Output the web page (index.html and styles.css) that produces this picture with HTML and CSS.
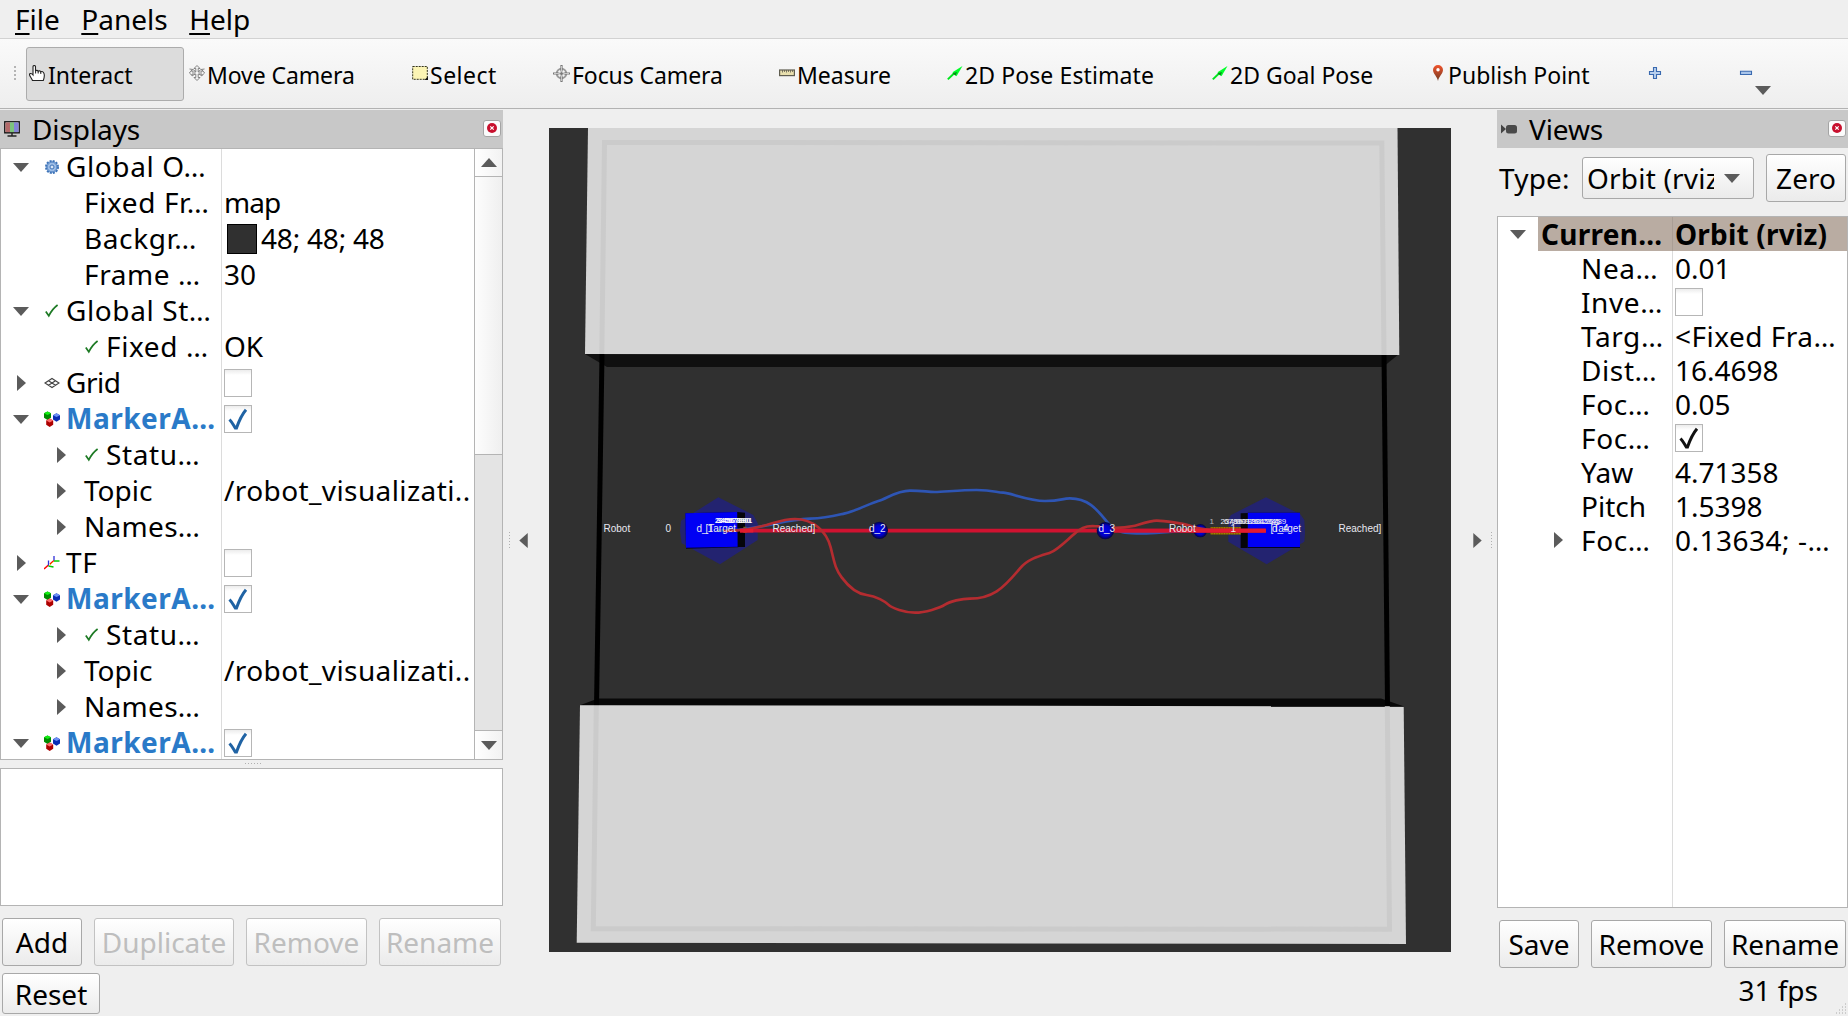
FILE: index.html
```html
<!DOCTYPE html>
<html lang="en">
<head>
<meta charset="utf-8">
<title>RViz</title>
<link rel="stylesheet" href="styles.css">
</head>
<body>
<svg width="0" height="0" class="defs" aria-hidden="true">
  <defs>
    <symbol id="down" viewBox="0 0 16 9"><path d="M0 0h16L8 9z" fill="#5b5b5b"/></symbol>
    <symbol id="right" viewBox="0 0 9 16"><path d="M0 0v16l9-8z" fill="#5b5b5b"/></symbol>
    <symbol id="tick" viewBox="0 0 16 16"><path d="M1.8 8.6l3 4.2C7 8.5 9.5 5 13.6 2" fill="none" stroke="#1d7a24" stroke-width="1.7"/></symbol>
    <symbol id="cubes" viewBox="0 0 16 16">
      <path d="M0 2.200L3.500.4 7 2.200v4.500L3.500 8.900 0 6.700z" fill="#008a00"/><path d="M0 2.200L3.500.4 7 2.200 3.500 4z" fill="#12f012"/>
      <path d="M9 4.200L12.500 2.300 16 4.200v4.300l-3.500 2.200L9 8.500z" fill="#0a2cb4"/><path d="M9 4.200l3.500-1.900L16 4.200 12.500 6z" fill="#6b8ff5"/>
      <path d="M2.200 9.500l3.500-1.900 3.500 1.900v4.300L5.700 16l-3.500-2.200z" fill="#ad0000"/><path d="M2.200 9.500l3.500-1.900 3.500 1.900-3.500 2z" fill="#ff6a6a"/>
    </symbol>
    <symbol id="arrow2d" viewBox="0 0 16 16"><path d="M.8 14.400L8 7.500" stroke="#00e51e" stroke-width="2"/><path d="M15.500 1L5.500 7.200l4 4z" fill="#00ff2a"/><path d="M10 7l-4.500 1.200 3 2.500z" fill="#058c16"/></symbol>
    <symbol id="close" viewBox="0 0 10 10"><circle cx="5" cy="5" r="5" fill="#c8102e"/><path d="M3.300 3.300l3.400 3.400M6.700 3.300L3.300 6.700" stroke="#fff" stroke-width="1.200"/></symbol>
    <symbol id="check" viewBox="0 0 28 28"><path d="M5.500 14.500c2 2 3.300 4.500 5.800 8.500L12.500 23C15 16 18 9.500 22 4.800" fill="none" stroke="currentColor" stroke-width="3"/></symbol>
    <radialGradient id="ball"><stop offset="0" stop-color="#0000ee"/><stop offset=".6" stop-color="#0000c8"/><stop offset="1" stop-color="#04043c"/></radialGradient>
  </defs>
</svg>

<nav class="menubar">
  <span><u>F</u>ile</span><span><u>P</u>anels</span><span><u>H</u>elp</span>
</nav>

<div class="toolbar">
  <i class="grip"></i>
  <button class="tool active t-interact"><svg class="ico" viewBox="0 0 16 16"><path d="M3.500 15.500C2.500 13 .5 11 .5 9.500c0-1.400 2-1.400 3.500.5V1.500C4 .2 6.500.2 6.500 1.500V6c.5-1 2.500-.8 2.700.3.700-.8 2.200-.6 2.500.6.700-.7 2-.5 2.800.6.900 1.200 1.200 4-.2 8z" fill="#fff" stroke="#222" stroke-width="1.100"/><path d="M6.600 6v2.500M9.200 6.500v2M11.800 7v2" stroke="#222"/></svg><span>Interact</span></button>
  <button class="tool t-move"><svg class="ico" viewBox="0 0 16 16"><g fill="#f4f4f4" stroke="#777" stroke-width=".9"><path d="M8 .5l3 3H9.200V7H13V4.800L15.600 8 13 10.500V9H9.200v3.500H11l-3 3-3-3h1.800V9H3v1.500L.4 8 3 4.800V7h3.800V3.500H5z"/><path d="M.5 4l3.500.5 2.500 2M15.500 4l-3.500.5-2.500 2M3 11l3-2M13 11l-3-2" fill="none"/></g></svg><span>Move Camera</span></button>
  <button class="tool t-select"><svg class="ico" viewBox="0 0 16 16"><rect x=".7" y="1.500" width="14.600" height="12.800" fill="#fbf4b4" stroke="#33331c" stroke-dasharray="2 1"/><path d="M16 11.500V15h-3.500z" fill="#111"/></svg><span>Select</span></button>
  <button class="tool t-focus"><svg class="ico wide" viewBox="0 0 17 17"><circle cx="8.500" cy="8.500" r="4.700" fill="none" stroke="#999" stroke-width="2"/><path d="M8.500 0v6.500M8.500 10.500V17M0 8.500h6.500M10.500 8.500H17" stroke="#777" stroke-width="2.200"/><path d="M8.500 1v5M8.500 11v5M1 8.500h5M11 8.500h5" stroke="#ddd" stroke-width=".8"/><circle cx="8.500" cy="8.500" r="1.500" fill="#777"/></svg><span>Focus Camera</span></button>
  <button class="tool t-measure"><svg class="ico" viewBox="0 0 16 16"><rect x=".6" y="5" width="14.800" height="5.600" fill="#e8dfae" stroke="#5f5d50" stroke-width="1.200"/><path d="M3.500 5v2.500M5.500 5v2M7.500 5v2.500M9.500 5v2M11.500 5v2.500M13.500 5v2" stroke="#5f5d50" stroke-width=".8"/></svg><span>Measure</span></button>
  <button class="tool t-pose"><svg class="ico"><use href="#arrow2d"/></svg><span>2D Pose Estimate</span></button>
  <button class="tool t-goal"><svg class="ico"><use href="#arrow2d"/></svg><span>2D Goal Pose</span></button>
  <button class="tool t-publish"><svg class="ico" viewBox="0 0 16 16"><linearGradient id="pin" x1="0" y1="0" x2="0" y2="1"><stop offset="0" stop-color="#f2542c"/><stop offset="1" stop-color="#6e3a22"/></linearGradient><path d="M8 16C7.400 12 3 8.500 3 5a5 5 0 0 1 10 0c0 3.500-4.400 7-5 11z" fill="url(#pin)"/><circle cx="8" cy="4.800" r="1.700" fill="#fff"/></svg><span>Publish Point</span></button>
  <button class="tool t-plus"><svg class="ico" viewBox="0 0 16 16"><path d="M6.500 2.500h3v4h4v3h-4v4h-3v-4h-4v-3h4z" fill="#b9d0ee" stroke="#3a6ab0" stroke-width="1.100"/></svg></button>
  <button class="tool"><svg class="ico" viewBox="0 0 16 16"><path d="M2.500 6.300h11v3.200h-11z" fill="#a9c5ea" stroke="#3a6ab0" stroke-width="1.100"/></svg><svg class="dd"><use href="#down"/></svg></button>
</div>

<main class="work">
  <section class="dock displays">
    <header class="dock-title"><svg class="ico" viewBox="0 0 16 16"><rect x=".8" y=".8" width="14.400" height="11" fill="#fff" stroke="#111" stroke-width="1.400"/><path d="M1.500 1.500H6v9.600H1.500z" fill="#b46a6a"/><path d="M6 1.500h4v9.600H6z" fill="#7dc47d"/><path d="M10 1.500h4.500v9.600H10z" fill="#8484d8"/><path d="M8 12v2.500M3.500 15h9" stroke="#222" stroke-width="1.400"/></svg><h2>Displays</h2><button class="close"><svg><use href="#close"/></svg></button></header>
    <div class="frame tree-frame">
      <div class="tree">
        <div class="row"><div class="name"><i class="tw"><svg class="dn"><use href="#down"/></svg></i><svg class="ico" viewBox="0 0 16 16"><circle cx="8" cy="8" r="6" fill="#8fb2de" stroke="#3f74b8" stroke-width="2" stroke-dasharray="2 1.140"/><circle cx="8" cy="8" r="4.800" fill="#9dbde6" stroke="#5e8cc8"/><circle cx="8" cy="8" r="2" fill="#d9e6f6" stroke="#3f74b8"/></svg><span>Global O…</span></div><div class="val"></div></div>
        <div class="row"><div class="name sub"><i class="tw"></i><span>Fixed Fr…</span></div><div class="val"><span class="map">map</span></div></div>
        <div class="row"><div class="name sub"><i class="tw"></i><span>Backgr…</span></div><div class="val"><i class="swatch"></i><span class="nums">48; 48; 48</span></div></div>
        <div class="row"><div class="name sub"><i class="tw"></i><span>Frame …</span></div><div class="val"><span>30</span></div></div>
        <div class="row"><div class="name"><i class="tw"><svg class="dn"><use href="#down"/></svg></i><svg class="ico"><use href="#tick"/></svg><span>Global St…</span></div><div class="val"></div></div>
        <div class="row"><div class="name sub"><i class="tw"></i><svg class="ico"><use href="#tick"/></svg><span>Fixed …</span></div><div class="val"><span>OK</span></div></div>
        <div class="row"><div class="name"><i class="tw"><svg class="rt"><use href="#right"/></svg></i><svg class="ico" viewBox="0 0 16 16"><path d="M1 8l7-4.500L15 8l-7 4.500zM4.500 5.800l7 4.500M11.500 5.800l-7 4.500" fill="none" stroke="#444" stroke-width="1.200"/></svg><span class="grid">Grid</span></div><div class="val"><i class="box"></i></div></div>
        <div class="row"><div class="name on"><i class="tw"><svg class="dn"><use href="#down"/></svg></i><svg class="ico"><use href="#cubes"/></svg><span>MarkerA…</span></div><div class="val"><i class="box blue"><svg><use href="#check"/></svg></i></div></div>
        <div class="row"><div class="name sub"><i class="tw"><svg class="rt"><use href="#right"/></svg></i><svg class="ico"><use href="#tick"/></svg><span>Statu…</span></div><div class="val"></div></div>
        <div class="row"><div class="name sub"><i class="tw"><svg class="rt"><use href="#right"/></svg></i><span class="topic">Topic</span></div><div class="val"><span class="path">/robot_visualizati..</span></div></div>
        <div class="row"><div class="name sub"><i class="tw"><svg class="rt"><use href="#right"/></svg></i><span class="names">Names…</span></div><div class="val"></div></div>
        <div class="row"><div class="name"><i class="tw"><svg class="rt"><use href="#right"/></svg></i><svg class="ico" viewBox="0 0 16 16"><path d="M0 14l4.500-4M6 9l4-3.500" stroke="#f00" stroke-width="1.500"/><path d="M4.500 10.500V5.500M10 5.500V1" stroke="#3030d8" stroke-width="1.300"/><path d="M4.500 11l5 1M10 6h5.500" stroke="#0c0" stroke-width="1.300"/><path d="M5.500 10.500l4-4" stroke="#e8c020"/></svg><span>TF</span></div><div class="val"><i class="box"></i></div></div>
        <div class="row"><div class="name on"><i class="tw"><svg class="dn"><use href="#down"/></svg></i><svg class="ico"><use href="#cubes"/></svg><span>MarkerA…</span></div><div class="val"><i class="box blue"><svg><use href="#check"/></svg></i></div></div>
        <div class="row"><div class="name sub"><i class="tw"><svg class="rt"><use href="#right"/></svg></i><svg class="ico"><use href="#tick"/></svg><span>Statu…</span></div><div class="val"></div></div>
        <div class="row"><div class="name sub"><i class="tw"><svg class="rt"><use href="#right"/></svg></i><span class="topic">Topic</span></div><div class="val"><span class="path">/robot_visualizati..</span></div></div>
        <div class="row"><div class="name sub"><i class="tw"><svg class="rt"><use href="#right"/></svg></i><span class="names">Names…</span></div><div class="val"></div></div>
        <div class="row"><div class="name on"><i class="tw"><svg class="dn"><use href="#down"/></svg></i><svg class="ico"><use href="#cubes"/></svg><span>MarkerA…</span></div><div class="val"><i class="box blue"><svg><use href="#check"/></svg></i></div></div>
      </div>
      <div class="scroll">
        <div class="sb up"><svg class="dn"><use href="#down"/></svg></div>
        <div class="thumb"></div>
        <div class="groove"></div>
        <div class="sb"><svg class="dn"><use href="#down"/></svg></div>
      </div>
    </div>
    <i class="hgrip"></i>
    <div class="frame info"></div>
    <div class="buttons"><button class="btn b-add">Add</button><button class="btn b-dup" disabled>Duplicate</button><button class="btn b-rem" disabled>Remove</button><button class="btn b-ren" disabled>Rename</button></div>
    <div class="buttons reset"><button class="btn">Reset</button></div>
  </section>

  <div class="splitter left"><i></i><svg><use href="#right"/></svg></div>

  <svg class="scene" viewBox="549 128 902 824">
    <rect x="549" y="128" width="902" height="824" fill="#303030"/>
    <path d="M585 354h814l-16 13H607z" fill="#101010"/>
    <path d="M598 698.500h783l22.500 7.800L580 705.300z" fill="#080808"/>
    <path d="M599.500 354L594 706h5l5.500-352z" fill="#000"/>
    <path d="M1381.500 354h5l3.500 352h-5z" fill="#000"/>
    <path d="M588 128h809.500l1.800 227L585 354z" fill="#d5d5d5"/>
    <path d="M580 705.300l823.700 1L1406 944l-829.300-1.300z" fill="#d5d5d5"/>
    <path d="M601.800 354L604.500 142.500 1381.800 143l2.200 212" fill="none" stroke="#cbcbcb" stroke-width="5"/>
    <path d="M596.300 706L593.300 928.700l796.200 0.500-2.200-223" fill="none" stroke="#cbcbcb" stroke-width="5"/>
    <g transform="translate(580 460) scale(.33333)">
      <path d="M415 112l105 53 13 25v50L420 313 305 250l-5-38 3-30z" fill="#232370"/>
      <path d="M2058 112l-105 53-8 13v67l115 68 113-68 2-25-2-40-12-17z" fill="#232370"/>
      <path d="M316 160l156-4 3 106-157 4z" fill="#05051e"/><path d="M316 160l156-4 3 104-157 3z" fill="#0000f4"/>
      <path d="M472 156l23 2v103h-22z" fill="#05050a"/>
      <path d="M2003 158h157v106h-157z" fill="#05051e"/><path d="M2003 158h157v103h-157z" fill="#0000f4"/><path d="M1982 160l21-1v105h-21z" fill="#05050a"/>
      <path d="M490 203h10M490 216h10" stroke="#806600" stroke-width="6"/>
      <circle cx="1861" cy="212" r="20" fill="url(#ball)"/>
      <path d="M1892 201h91v23h-91z" fill="#705800"/><path d="M1892 204h91M1892 221h91" stroke="#a88400" stroke-width="4" stroke-dasharray="3 2"/>
      <path d="M410 212C470 212 500 208 560 196S640 178 690 176 760 168 795 160 870 130 895 123 950 92 990 92 1040 96 1065 96 1140 90 1190 90 1250 98 1270 98 1345 123 1395 123 1445 115 1470 115C1530 115 1555 155 1585 190S1650 220 1690 220 1780 212 1860 212" fill="none" stroke="#2e55b4" stroke-width="8"/>
      <path d="M480 212H2055" stroke="#d01230" stroke-width="11"/>
      <circle cx="898" cy="211" r="26" fill="url(#ball)"/><circle cx="1576" cy="212" r="26" fill="url(#ball)"/>
      <path d="M1602 212H2058" stroke="#d01230" stroke-width="11"/>
      <path d="M430 213C500 214 540 200 560 195S610 177 645 177C700 177 740 215 752 262S765 325 785 352 830 401 860 405 915 424 925 434 975 458 1005 458 1080 444 1095 434 1145 416 1170 416 1225 410 1250 394 1295 355 1320 325 1385 286 1410 278 1470 230 1495 212 1535 199 1560 199" fill="none" stroke="#b42c30" stroke-width="8"/>
      <path d="M1595 203C1620 205 1650 200 1660 198S1710 182 1730 182 1810 190 1840 200 1900 212 2058 213" fill="none" stroke="#b42c30" stroke-width="8"/>
      <path d="M1800 212h258" stroke="#e41a30" stroke-width="11"/>
      <path d="M480 212h40" stroke="#e41a30" stroke-width="11"/>
    </g>
    <g class="labels">
      <text x="603.500" y="531.500">Robot</text><text x="665.500" y="531.500">0</text>
      <text x="696.500" y="531.500">d_1</text><text x="705.500" y="531.500">[Target</text><text x="772.500" y="531.500">Reached]</text>
      <text x="869" y="531.500">d_2</text><text x="1098.500" y="531.500">d_3</text>
      <text x="1169" y="531.500">Robot</text><text x="1230.500" y="531.500">1</text>
      <text x="1270.500" y="531.500">[Target</text><text x="1272" y="531.500">d_4</text><text x="1338.500" y="531.500">Reached]</text>
    </g>
    <g class="ticks">
      <text class="bold" x="715" y="522.500">234567890</text><text class="bold" x="717" y="522.500">345678901</text>
      <text x="1209.500" y="524" opacity=".7">1</text><text x="1220.500" y="524">2345678901234</text><text x="1224" y="524">67890123456789</text><text x="1236" y="524">0987612345</text>
    </g>
  </svg>

  <div class="splitter rightside"><svg><use href="#right"/></svg><i></i></div>

  <section class="dock views">
    <header class="dock-title"><svg class="ico" viewBox="0 0 16 16"><path d="M0 3.500l5 4.500-5 4.500z" fill="#444"/><rect x="5" y="4" width="11" height="8.500" rx="2.500" fill="#4a4a4a"/></svg><h2>Views</h2><button class="close"><svg><use href="#close"/></svg></button></header>
    <div class="typebar"><label>Type:</label><div class="combo"><span>Orbit (rviz)</span><svg><use href="#down"/></svg></div><button class="btn zero">Zero</button></div>
    <div class="frame vtree">
      <div class="row cur"><div class="name"><i class="tw"><svg class="dn"><use href="#down"/></svg></i><span>Curren…</span></div><div class="val"><span>Orbit (rviz)</span></div></div>
      <div class="row"><div class="name sub"><i class="tw"></i><span>Nea…</span></div><div class="val"><span>0.01</span></div></div>
      <div class="row"><div class="name sub"><i class="tw"></i><span>Inve…</span></div><div class="val"><i class="box"></i></div></div>
      <div class="row"><div class="name sub"><i class="tw"></i><span>Targ…</span></div><div class="val"><span class="target">&lt;Fixed Fra…</span></div></div>
      <div class="row"><div class="name sub"><i class="tw"></i><span>Dist…</span></div><div class="val"><span>16.4698</span></div></div>
      <div class="row"><div class="name sub"><i class="tw"></i><span>Foc…</span></div><div class="val"><span>0.05</span></div></div>
      <div class="row"><div class="name sub"><i class="tw"></i><span>Foc…</span></div><div class="val"><i class="box"><svg><use href="#check"/></svg></i></div></div>
      <div class="row"><div class="name sub"><i class="tw"></i><span class="yaw">Yaw</span></div><div class="val"><span>4.71358</span></div></div>
      <div class="row"><div class="name sub"><i class="tw"></i><span class="yaw">Pitch</span></div><div class="val"><span>1.5398</span></div></div>
      <div class="row"><div class="name sub"><i class="tw"><svg class="rt"><use href="#right"/></svg></i><span>Foc…</span></div><div class="val"><span class="target">0.13634; -…</span></div></div>
      <div class="row fill"><div class="name"></div><div class="val"></div></div>
    </div>
    <div class="buttons"><button class="btn b-save">Save</button><button class="btn b-vrem">Remove</button><button class="btn b-vren">Rename</button></div>
    <div class="fps">31 fps</div>
    <svg class="sizegrip" viewBox="0 0 12 12"><path d="M10 1h1M7 4h1M10 4h1M4 7h1M7 7h1M10 7h1M1 10h1M4 10h1M7 10h1M10 10h1" stroke="#aaa" stroke-width="1"/></svg>
  </section>
</main>
</body>
</html>
```
FILE: styles.css
```css
* { box-sizing: border-box; }
html, body { margin: 0; height: 1016px; overflow: hidden; }
body {
  display: flex; flex-direction: column;
  background: #efefef; color: #000;
  font-family: "Noto Sans", sans-serif; font-size: 28px; white-space: nowrap;
}
button { font: inherit; color: inherit; padding: 0; margin: 0; }
svg { display: block; flex: none; }
.defs { position: absolute; }
.ico { width: 16px; height: 16px; flex: none; }
.ico.wide { width: 17px; height: 17px; }

.menubar { height: 39px; flex: none; display: flex; gap: 21.5px; padding-left: 15px; line-height: 38px; border-bottom: 1px solid #d2d2d2; }
.menubar u { text-decoration-thickness: 2px; text-underline-offset: 3px; text-decoration-skip-ink: none; }

.toolbar { height: 70px; flex: none; display: flex; align-items: center; background: linear-gradient(#fafafa, #eeeeee); border-bottom: 1px solid #b2b2b2; font-size: 23px; }
.grip { width: 5px; height: 17px; margin: 0 8px 0 13px; background: radial-gradient(circle, #b4b4b4 .8px, transparent 1px) 0 0/4px 4px; }
.tool { position: relative; display: flex; align-items: center; gap: 2px; height: 54px; border: 1px solid transparent; padding-left: 1px; background: none; border-radius: 3px; }
.tool .ico { margin-bottom: 1px; }
.tool span { padding-top: 2px; }
.tool.active { background: #dcdcdc; border-color: #acacac; }
.t-interact { width: 158px; margin-right: 3px; padding-left: 2px; gap: 3px; }
.t-move span, .t-focus span { letter-spacing: -.1px; }
.t-move { width: 223px; }
.t-select { width: 141px; }
.t-select span { letter-spacing: .5px; }
.t-focus { width: 226px; }
.t-measure { width: 168px; }
.t-pose { width: 265px; }
.t-pose span { letter-spacing: .1px; }
.t-goal { width: 218px; }
.t-publish { width: 217px; }
.t-plus { width: 91px; }
.dd { position: absolute; left: 18px; top: 38px; width: 16px; height: 9px; }

.work { flex: 1; min-height: 0; display: flex; }
.dock { display: flex; flex-direction: column; flex: none; padding-top: 1px; }
.displays { width: 503px; }
.dock-title { height: 38px; flex: none; display: flex; align-items: center; background: #c8c8c8; padding: 0 2px 0 4px; }
.dock-title h2 { margin: 0 auto 0 12px; font-size: 28px; font-weight: 400; letter-spacing: -.1px; line-height: 38px; }
.close { width: 18px; height: 17px; border: 1px solid #a4a4a4; border-radius: 3px; background: #fbfbfb; display: flex; align-items: center; justify-content: center; margin-bottom: 2px; }
.close svg { width: 10px; height: 10px; }
.frame { background: #fff; border: 1px solid #b4b4b4; }

.tree-frame { height: 612px; flex: none; display: flex; overflow: hidden; }
.tree { width: 473px; flex: none; overflow: hidden; }
.row { display: flex; height: 36px; line-height: 35px; }
.name { width: 221px; flex: none; display: flex; align-items: center; border-right: 1px solid #dcdcdc; }
.name > span { padding-left: 6px; letter-spacing: .6px; height: 100%; }
.name.on > span { color: #2a7ac8; font-weight: 700; letter-spacing: .5px; }
.name > span.grid { letter-spacing: -.5px; }
.name > span.topic { letter-spacing: 0; }
.name > span.names { letter-spacing: .3px; }
.sub { padding-left: 40px; }
.sub > .tw + span { padding-left: 1px; }
.tw { width: 40px; height: 36px; flex: none; display: flex; align-items: center; justify-content: center; margin-right: 3px; }
.sub .tw { margin-right: 2px; }
.sub .ico { margin-left: 1px; }
.sub .ico + span { padding-left: 6px; }
.dn { width: 16px; height: 9px; }
.rt { width: 9px; height: 16px; }
.val { flex: 1; display: flex; align-items: center; padding-left: 1px; }
.val > span { height: 100%; padding-left: 1px; }
.map { letter-spacing: -1px; }
.nums { letter-spacing: -.2px; }
.path { letter-spacing: .4px; }
.swatch { width: 30px; height: 30px; margin: 0 3px 0 4px; background: #303030; border: 1px solid #000; }
.box { width: 28px; height: 28px; margin-left: 1px; flex: none; border: 1px solid #b6b6b6; background: linear-gradient(#ececec, #fff 5px); color: #111; }
.box svg { width: 28px; height: 28px; margin: -1px; }
.box.blue { color: #2063a4; }
.scroll { width: 28px; display: flex; flex-direction: column; border-left: 1px solid #b4b4b4; }
.sb { height: 28px; display: flex; align-items: center; justify-content: center; background: linear-gradient(90deg, #fff, #f2f2f2); }
.sb.up { border-bottom: 1px solid #b4b4b4; }
.sb.up svg { transform: rotate(180deg); }
.thumb { height: 278px; background: linear-gradient(90deg, #fdfdfd, #efefef); border-bottom: 1px solid #b4b4b4; }
.groove { flex: 1; background: #e4e4e4; border-bottom: 1px solid #b4b4b4; }
.hgrip { width: 17px; height: 1px; margin: 3px auto 4px 245px; background: repeating-linear-gradient(90deg, #b0b0b0 0 1px, transparent 1px 3px); }
.info { height: 138px; flex: none; }

.buttons { display: flex; padding: 12px 0 0 2px; }
.btn { height: 48px; border: 1px solid #a8a8a8; border-radius: 3px; background: linear-gradient(#fff, #ebebeb); text-align: center; line-height: 45px; }
.btn:disabled { color: #bebebe; border-color: #c2c2c2; }
.b-add { width: 80px; }
.b-dup { width: 140px; margin: 0 12px; }
.b-rem { width: 121px; }
.b-ren { width: 122px; margin-left: 12px; }
.reset { padding-top: 7px; }
.reset .btn { width: 98px; height: 41px; line-height: 38px; }

.splitter { width: 46px; flex: none; display: flex; align-items: center; padding-bottom: 45px; }
.splitter i { width: 1px; height: 17px; background: repeating-linear-gradient(#b0b0b0 0 1px, transparent 1px 3px); }
.splitter svg { width: 9px; height: 15px; }
.left i { margin: 0 9px 0 6px; }
.left svg { transform: rotate(180deg); }
.rightside svg { margin: 0 9px 0 22px; }
.scene { width: 902px; height: 824px; margin-top: 19px; }
.labels { font: 10px "Liberation Sans", sans-serif; fill: #e8e8f0; }
.ticks { font: 8px "Liberation Sans", sans-serif; fill: #e8e8f0; }
.ticks .bold { font-size: 7px; font-weight: 700; fill: #fff; }

.views { width: 351px; position: relative; }
.typebar { height: 68px; flex: none; display: flex; align-items: center; padding-left: 2px; padding-bottom: 8px; }
.typebar label { width: 83px; letter-spacing: .2px; }
.combo { width: 172px; height: 42px; display: flex; align-items: center; border: 1px solid #a8a8a8; border-radius: 3px; background: linear-gradient(#fff, #ebebeb); padding-left: 4px; }
.combo span { width: 127px; overflow: hidden; line-height: 38px; letter-spacing: .2px; }
.combo svg { width: 16px; height: 9px; margin-left: 10px; }
.zero { width: 80px; margin-left: 12px; }
.vtree { height: 692px; flex: none; display: flex; flex-direction: column; }
.vtree .row { height: 34px; line-height: 34px; }
.vtree .name { width: 175px; }
.vtree .name > span { letter-spacing: .6px; }
.vtree .name > span.yaw { letter-spacing: 0; }
.vtree .val { padding-left: 1px; }
.vtree .target { letter-spacing: .5px; }
.vtree .tw { height: 34px; }
.cur { font-weight: 700; background: linear-gradient(90deg, #fff 40px, #b9aca2 40px); }
.cur .name { border-color: #aa9e95; }
.vtree .cur .name > span { padding-left: 0; letter-spacing: .3px; }
.cur .val > span { letter-spacing: .2px; }
.vtree .fill { flex: 1; height: auto; }
.b-save { width: 80px; }
.b-vrem { width: 121px; margin: 0 12px; }
.b-vren { width: 122px; }
.fps { line-height: 38px; padding: 3px 30px 0 0; text-align: right; }
.sizegrip { position: absolute; right: 1px; bottom: 1px; width: 12px; height: 12px; }
```
